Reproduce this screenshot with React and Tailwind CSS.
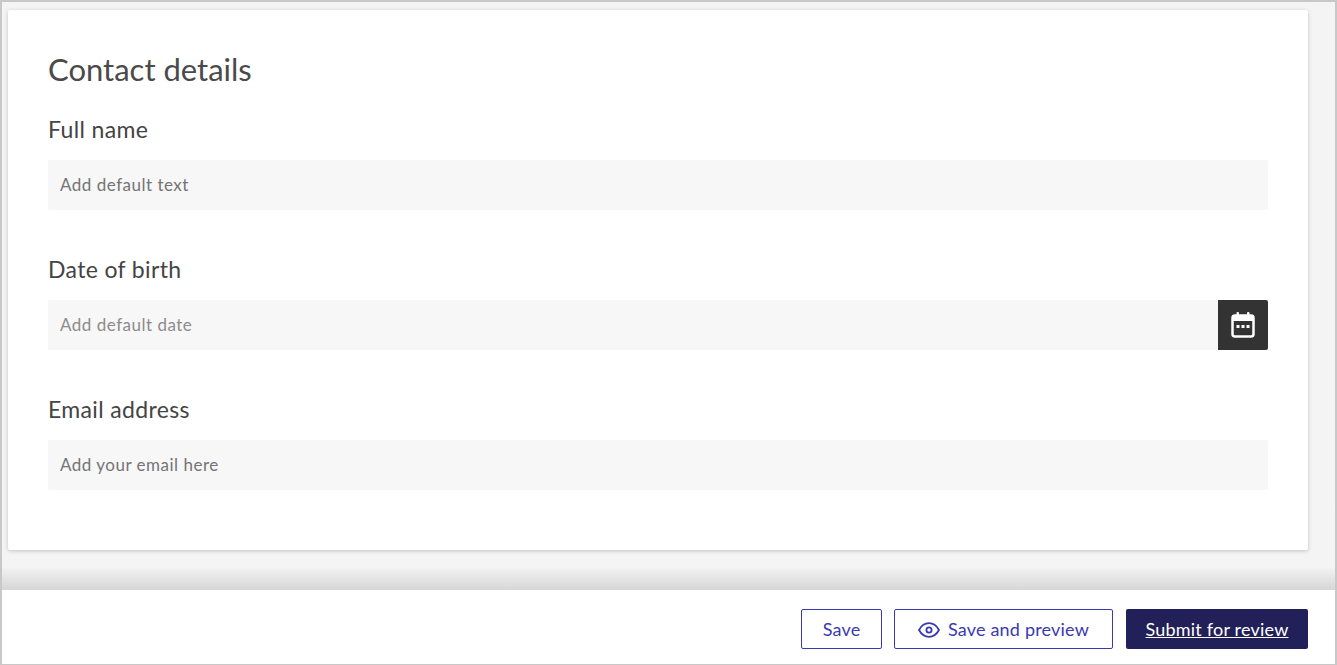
import React from 'react';

function Field({ label, placeholder, date }) {
  return (
    <div className="mb-[45px]">
      <label className="block text-[23px] tracking-[0.35px] leading-[28px] text-[#444444] mb-[17px]">{label}</label>
      <div className="flex h-[50px]">
        <div className={`flex-1 flex items-center bg-[#f7f7f7] px-3 text-[17px] tracking-[0.5px] ${date ? 'text-[#8c8c8c] rounded-l-[2px]' : 'text-[#747474] rounded-[2px]'}`}>
          {placeholder}
        </div>
        {date && (
          <button className="w-[50px] flex items-center justify-center bg-[#333333] rounded-r-[2px]">
            <svg width="26" height="28" viewBox="0 0 26 28" fill="none">
              <rect x="2.5" y="4.5" width="21" height="21" rx="2.5" stroke="#fff" strokeWidth="2.5" />
              <rect x="2.5" y="4" width="21" height="6" fill="#fff" />
              <rect x="6.5" y="1" width="2.5" height="5" rx="1" fill="#fff" />
              <rect x="17" y="1" width="2.5" height="5" rx="1" fill="#fff" />
              <rect x="6.5" y="14" width="3" height="3" fill="#fff" />
              <rect x="11.5" y="14" width="3" height="3" fill="#fff" />
              <rect x="16.5" y="14" width="3" height="3" fill="#fff" />
            </svg>
          </button>
        )}
      </div>
    </div>
  );
}

export default function App() {
  return (
    <div className="h-[665px] flex flex-col border-2 border-b border-[#c8c8c8] bg-[#f4f4f4] font-['Lato','Open_Sans',sans-serif] overflow-hidden">
      <div className="flex-1 flex flex-col min-h-0 bg-gradient-to-b from-[#f4f4f4] from-[96%] to-[#d6d6d6]">
        <div className="ml-[6px] mr-[27px] mt-2 h-[540px] bg-white rounded-[2px] shadow-[0_1px_4px_rgba(0,0,0,0.2)] px-10 pt-[37px]">
          <h1 className="text-[31px] leading-[44px] text-[#4a4a4a] mb-6">Contact details</h1>
          <Field label="Full name" placeholder="Add default text" />
          <Field label="Date of birth" placeholder="Add default date" date />
          <Field label="Email address" placeholder="Add your email here" />
        </div>
      </div>
      <div className="h-[74px] bg-white flex items-start justify-end gap-3 pt-[19px] pr-[27px]">
        <button className="h-10 w-[81px] border border-[#3a3ab0] rounded-[2px] text-[18px] tracking-[0.2px] text-[#3a3ab0]">Save</button>
        <button className="h-10 w-[219px] flex items-center justify-center gap-2 border border-[#3a3ab0] rounded-[2px] text-[18px] tracking-[0.2px] text-[#3a3ab0]">
          <svg className="mt-0.5" width="22" height="16" viewBox="0 0 22 16" fill="none" stroke="#3a3ab0" strokeWidth="1.8">
            <path d="M1 8C3.5 3.5 7 1.2 11 1.2S18.5 3.5 21 8c-2.5 4.5-6 6.8-10 6.8S3.5 12.5 1 8Z" />
            <circle cx="11" cy="8" r="2.6" />
          </svg>
          Save and preview
        </button>
        <button className="h-10 w-[182px] ml-px bg-[#212058] rounded-[2px] text-[18px] tracking-[0.2px] text-white underline">Submit for review</button>
      </div>
    </div>
  );
}
